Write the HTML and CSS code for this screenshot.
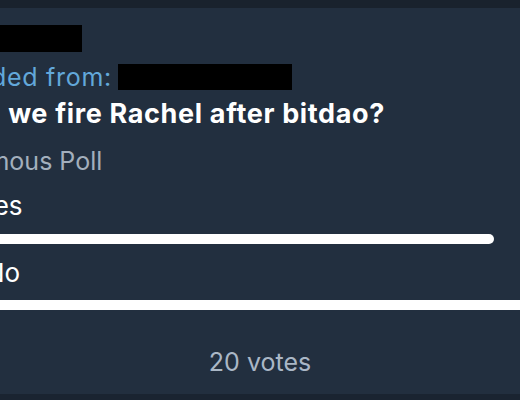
FILE: index.html
```html
<!DOCTYPE html>
<html>
<head>
<meta charset="utf-8">
<link rel="stylesheet" href="styles.css">
</head>
<body>
<div class="screen">
  <div class="topbar"></div>
  <div class="bubble">
    <div class="content">
      <div class="name"><span class="redact redact-name"></span></div>
      <div class="fwd">Forwarded from: <span class="redact redact-fwd"></span></div>
      <div class="question">Should we fire Rachel after bitdao?</div>
      <div class="type">Anonymous Poll</div>
      <div class="option option-first">
        <div class="label label-yes">Yes</div>
        <div class="track"><div class="bar bar-yes"></div></div>
      </div>
      <div class="option">
        <div class="label label-no">No</div>
        <div class="track"><div class="bar bar-no"></div></div>
      </div>
    </div>
    <div class="total">20 votes</div>
  </div>
  <div class="bottombar"></div>
</div>
</body>
</html>
```
FILE: styles.css
```css
html, body {
  margin: 0;
  padding: 0;
  background: #1a2430;
}
.screen {
  width: 520px;
  height: 400px;
  overflow: hidden;
  display: flex;
  flex-direction: column;
  font-family: Inter, "Liberation Sans", sans-serif;
}
.topbar {
  height: 8px;
  flex: none;
  background: #19222d;
}
.bubble {
  flex: none;
  height: 386px;
  background: #222f3f;
  display: flex;
  flex-direction: column;
}
.content {
  margin-left: -80px;
  width: 640px;
  display: flex;
  flex-direction: column;
}
.name {
  height: 27px;
  margin-top: 17px;
}
.redact {
  display: inline-block;
  background: #000;
  vertical-align: top;
}
.redact-name {
  width: 162px;
  height: 27px;
}
.fwd {
  margin-top: 10px;
  margin-left: -15px;
  height: 30px;
  font-size: 25px;
  letter-spacing: 0.7px;
  line-height: 30px;
  color: #62a8da;
  white-space: nowrap;
}
.redact-fwd {
  width: 174px;
  height: 26px;
  margin-top: 2px;
  margin-left: -2px;
}
.question {
  margin-top: 5px;
  margin-left: -15px;
  font-size: 27px;
  letter-spacing: 0.65px;
  line-height: 34px;
  font-weight: 700;
  color: #ffffff;
  white-space: nowrap;
}
.type {
  margin-top: 15px;
  margin-left: -8px;
  font-size: 25px;
  line-height: 30px;
  color: #a3afbd;
  white-space: nowrap;
}
.option {
  padding-left: 66px;
  margin-top: 14px;
}
.option-first {
  margin-top: 15px;
}
.label {
  font-size: 26px;
  line-height: 30px;
  color: #ffffff;
}
.label-yes {
  margin-left: -8px;
}
.label-no {
  margin-left: -1px;
}
.track {
  margin-top: 13px;
  height: 10px;
}
.option + .option .track {
  margin-top: 12px;
}
.bar {
  height: 10px;
  border-radius: 5px;
  background: #ffffff;
}
.bar-yes {
  width: 508px;
}
.bar-no {
  width: 620px;
}
.total {
  margin-top: 37px;
  text-align: center;
  font-size: 25px;
  line-height: 30px;
  color: #aab7c6;
}
.bottombar {
  flex: 1;
  background: #1a2431;
}
```
